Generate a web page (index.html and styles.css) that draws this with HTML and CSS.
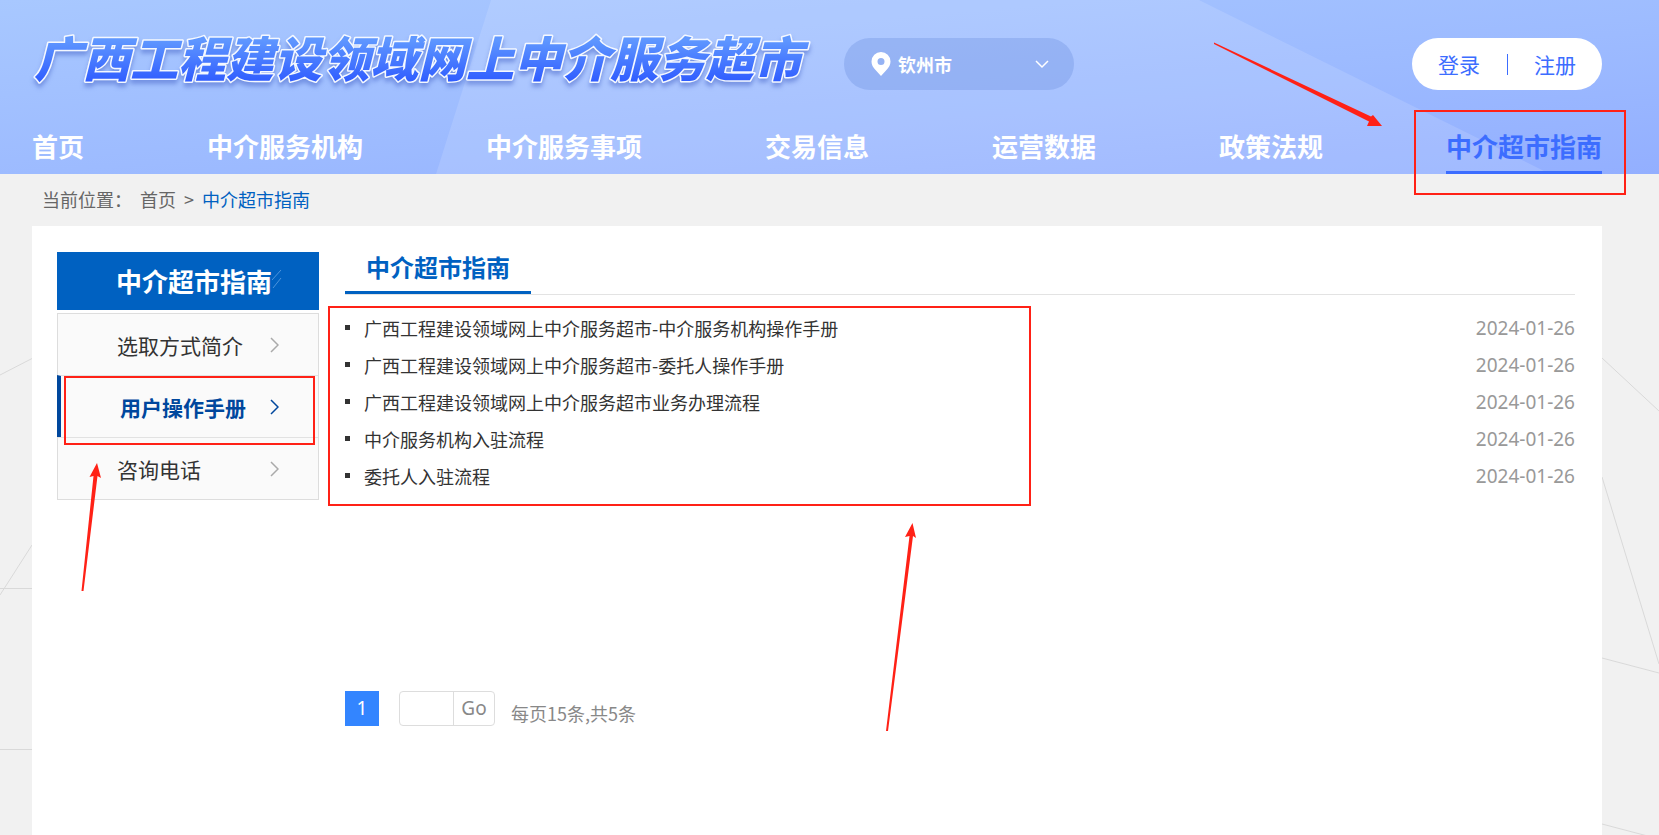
FILE: index.html
```
<!DOCTYPE html>
<html lang="zh-CN">
<head>
<meta charset="utf-8">
<meta name="viewport" content="width=device-width, initial-scale=1">
<title>中介超市指南</title>
<link rel="stylesheet" href="styles.css">
</head>
<body>
<div class="page">
  <header class="header">
    <svg class="header-bg" viewBox="0 0 1659 174" preserveAspectRatio="none" aria-hidden="true">
      <polygon points="491,0 1199,0 1550,174 436,174" fill="#fff" fill-opacity=".13"/>
    </svg>
    <div class="topbar">
      <h1 class="logo">
        <svg class="logo-svg" width="780" height="60" role="img" aria-label="广西工程建设领域网上中介服务超市">
          <defs>
            <linearGradient id="logoFill" gradientUnits="userSpaceOnUse" x1="0" y1="6" x2="0" y2="48">
              <stop offset="0" stop-color="#5f97ff"/>
              <stop offset="1" stop-color="#2f5cff"/>
            </linearGradient>
          </defs>
          <text class="logo-text" x="2" y="43" fill="url(#logoFill)">广西工程建设领域网上中介服务超市</text>
        </svg>
      </h1>
      <label class="city">
        <svg class="pin" viewBox="0 0 20 24" aria-hidden="true">
          <path fill="#fff" fill-rule="evenodd" d="M10 0a9.5 9.5 0 0 0-9.5 9.5c0 3.2 1.6 5.9 3.600 8L10 24l5.900-6.500c2-2.100 3.600-4.800 3.600-8A9.500 9.500 0 0 0 10 0zm0 6a3.500 3.500 0 1 1 0 7 3.500 3.500 0 0 1 0-7z"/>
        </svg>
        <select class="city-select" aria-label="城市">
          <option>钦州市</option>
        </select>
        <svg class="city-arrow" viewBox="0 0 14 9" aria-hidden="true"><path d="M1 1l6 6 6-6" fill="none" stroke="#fff" stroke-width="1.500"/></svg>
      </label>
      <div class="account">
        <a href="#">登录</a>
        <span class="account-line"></span>
        <a href="#">注册</a>
      </div>
    </div>
    <nav class="nav">
      <a href="#">首页</a>
      <a href="#">中介服务机构</a>
      <a href="#">中介服务事项</a>
      <a href="#">交易信息</a>
      <a href="#">运营数据</a>
      <a href="#">政策法规</a>
      <a href="#" class="active">中介超市指南</a>
    </nav>
  </header>

  <div class="body">
    <svg class="mesh mesh-left" width="32" height="661" aria-hidden="true">
      <path d="M0 201L32 184.500M32 371L0 421M0 414.500H32M0 575.500H32"/>
    </svg>
    <svg class="mesh mesh-right" width="57" height="661" aria-hidden="true">
      <path d="M0 184l57 53M0 303l57 187M0 484l57 15M0 650l57 15"/>
    </svg>

    <div class="crumbs">
      <span>当前位置：</span>
      <a href="#">首页</a>
      <span>&gt;</span>
      <a href="#" class="current">中介超市指南</a>
    </div>

    <div class="panel">
      <aside class="side">
        <h2 class="side-title">中介超市指南<svg class="side-mark" viewBox="0 0 12 20" aria-hidden="true"><path d="M0 10L9 0M1 18L9 8" fill="none" stroke="#4d94dc" stroke-width="1"/></svg></h2>
        <ul class="side-list">
          <li><a href="#">选取方式简介<svg class="chev" viewBox="0 0 9 16" aria-hidden="true"><path d="M1 1l7 7-7 7"/></svg></a></li>
          <li class="active"><a href="#">用户操作手册<svg class="chev" viewBox="0 0 9 16" aria-hidden="true"><path d="M1 1l7 7-7 7"/></svg></a></li>
          <li><a href="#">咨询电话<svg class="chev" viewBox="0 0 9 16" aria-hidden="true"><path d="M1 1l7 7-7 7"/></svg></a></li>
        </ul>
      </aside>

      <main class="main">
        <div class="main-head"><h2 class="main-title">中介超市指南</h2></div>
        <ul class="docs">
          <li><a href="#">广西工程建设领域网上中介服务超市-中介服务机构操作手册</a><time>2024-01-26</time></li>
          <li><a href="#">广西工程建设领域网上中介服务超市-委托人操作手册</a><time>2024-01-26</time></li>
          <li><a href="#">广西工程建设领域网上中介服务超市业务办理流程</a><time>2024-01-26</time></li>
          <li><a href="#">中介服务机构入驻流程</a><time>2024-01-26</time></li>
          <li><a href="#">委托人入驻流程</a><time>2024-01-26</time></li>
        </ul>
        <div class="pager">
          <a href="#" class="page-num">1</a>
          <form class="jump">
            <input type="text" class="jump-input" aria-label="页码">
            <button type="button" class="jump-go">Go</button>
          </form>
          <span class="pager-info">每页15条,共5条</span>
        </div>
      </main>
    </div>
  </div>

  <svg class="marks" aria-hidden="true">
    <g class="mark-box">
      <rect x="1415" y="111" width="210" height="83"/>
      <rect x="65" y="377" width="249" height="67"/>
      <rect x="329" y="307" width="701" height="198"/>
    </g>
    <g class="mark-arrow">
      <path d="M1214 42.500L1371 116.500L1373 115L1382 126L1367 126L1369 121.500L1214 44z"/>
      <path d="M81.500 591L93.500 476L89.500 477L97 463L101 478L97.500 476L83.500 591z"/>
      <path d="M886 731L909.500 536L905 537L912.500 523L916 538L913 536L888 731z"/>
    </g>
  </svg>
</div>
</body>
</html>
```
FILE: styles.css
```
* { box-sizing: border-box; }

body {
  margin: 0;
  background: #f1f1f1;
  color: #333;
  font-family: "Noto Sans CJK SC", sans-serif;
  font-size: 18px;
}

a { color: inherit; text-decoration: none; }
h1, h2, ul { margin: 0; padding: 0; }
ul { list-style: none; }

.page {
  position: relative;
  display: flex;
  flex-direction: column;
  min-height: 100vh;
  overflow: hidden;
}

/* Header */
.header {
  position: relative;
  padding: 0 57px 0 32px;
  background: linear-gradient(175deg, #a8c8ff 0%, #9dbbff 55%, #93afff 100%);
}
.header-bg {
  position: absolute;
  inset: 0;
  width: 100%;
  height: 100%;
}
.topbar {
  position: relative;
  display: flex;
  align-items: center;
  padding-top: 30px;
  height: 98px;
}
.logo { height: 60px; }
.logo-svg { display: block; overflow: visible; }
.logo-text {
  font-size: 48px;
  font-weight: 900;
  font-style: italic;
  stroke: #f4f8ff;
  stroke-width: 3px;
  stroke-linejoin: round;
  paint-order: stroke;
  filter: drop-shadow(0 4px 2px rgba(70, 100, 200, .5));
}
.city {
  display: flex;
  align-items: center;
  width: 230px;
  height: 52px;
  margin-left: 32px;
  padding: 0 25px 0 27px;
  border-radius: 26px;
  background: rgba(100, 135, 220, .3);
}
.pin { width: 20px; height: 24px; flex: none; }
.city-select {
  flex: 1;
  min-width: 0;
  padding: 0 0 0 7px;
  border: 0;
  background: none;
  appearance: none;
  color: #fff;
  font: bold 18px "Noto Sans CJK SC", sans-serif;
}
.city-arrow { width: 14px; height: 9px; flex: none; }
.account {
  display: flex;
  align-items: center;
  justify-content: space-between;
  width: 190px;
  height: 52px;
  margin-left: auto;
  padding: 0 26px;
  border-radius: 26px;
  background: #fff;
  color: #3c6dff;
  font-size: 21px;
}
.account-line { width: 1px; height: 21px; background: #3c6dff; }

.nav {
  position: relative;
  display: flex;
  justify-content: space-between;
  height: 76px;
  color: #fff;
  font-size: 26px;
  font-weight: bold;
  line-height: 50px;
}
.nav a { padding-top: 23px; }
.nav .active {
  color: #3c6dff;
  border-bottom: 3px solid #3c6dff;
}

/* Page body */
.body {
  position: relative;
  flex: 1;
  display: flex;
  flex-direction: column;
  padding: 0 57px 0 32px;
}
.mesh {
  position: absolute;
  top: 0;
  fill: none;
  stroke: #d9d9d9;
  stroke-width: 1;
}
.mesh-left { left: 0; }
.mesh-right { right: 0; }

.crumbs {
  display: flex;
  gap: 8px;
  height: 52px;
  padding-left: 10px;
  color: #666;
  line-height: 50px;
}
.crumbs .current { color: #0061c1; }

.panel {
  flex: 1;
  display: flex;
  align-items: flex-start;
  gap: 26px;
  padding: 26px 27px 26px 25px;
  background: #fff;
}

/* Side menu */
.side { width: 262px; flex: none; }
.side-title {
  display: flex;
  align-items: center;
  height: 58px;
  padding: 0 0 2px 59px;
  background: #0061c1;
  color: #fff;
  font-size: 26px;
}
.side-mark { width: 12px; height: 20px; }
.side-list {
  margin-top: 3px;
  border: 1px solid #ddd;
  background: #fafafa;
  font-size: 21px;
}
.side-list li + li { border-top: 1px solid #e2e2e2; }
.side-list a {
  display: flex;
  align-items: center;
  justify-content: space-between;
  height: 61px;
  padding: 0 39px 0 59px;
}
.side-list .active {
  margin-left: -1px;
  border-left: 4px solid #00479d;
  color: #00479d;
  font-weight: bold;
}
.chev {
  width: 9px;
  height: 16px;
  fill: none;
  stroke: #aaa;
  stroke-width: 1.5;
}
.active .chev { stroke: #00479d; }

/* Documents */
.main { flex: 1; min-width: 0; }
.main-head {
  display: flex;
  height: 43px;
  border-bottom: 1px solid #e3e3e3;
}
.main-title {
  padding: 0 21px;
  border-bottom: 3px solid #0061c1;
  color: #0061c1;
  font-size: 24px;
  line-height: 30px;
}
.docs { padding-top: 14px; }
.docs li {
  display: flex;
  align-items: center;
  height: 37px;
}
.docs li::before {
  content: "";
  width: 5px;
  height: 5px;
  margin-right: 14px;
  background: #333;
}
.docs time {
  margin-left: auto;
  color: #999;
  font-family: "Noto Sans", sans-serif;
  font-size: 19px;
}

.pager {
  display: flex;
  align-items: center;
  margin-top: 196px;
  color: #888;
}
.page-num {
  width: 34px;
  height: 35px;
  background: #3385ff;
  color: #fff;
  font-family: "Noto Sans", sans-serif;
  font-size: 19px;
  line-height: 35px;
  text-align: center;
}
.jump {
  display: flex;
  width: 96px;
  height: 35px;
  margin-left: 20px;
  border: 1px solid #ddd;
  border-radius: 4px;
}
.jump-input {
  width: 54px;
  padding: 0 6px;
  border: 0;
  border-right: 1px solid #ddd;
  background: none;
  font-size: 18px;
}
.jump-go {
  flex: 1;
  padding: 0;
  border: 0;
  background: none;
  color: #888;
  font-family: "Noto Sans", sans-serif;
  font-size: 19px;
}
.pager-info {
  margin-left: 16px;
  padding-top: 10px;
}

/* Annotations over the page */
.marks {
  position: absolute;
  top: 0;
  left: 0;
  width: 100%;
  height: 100%;
  pointer-events: none;
}
.mark-box { fill: none; stroke: #ff2116; stroke-width: 2; }
.mark-arrow { fill: #ff2116; }
```
